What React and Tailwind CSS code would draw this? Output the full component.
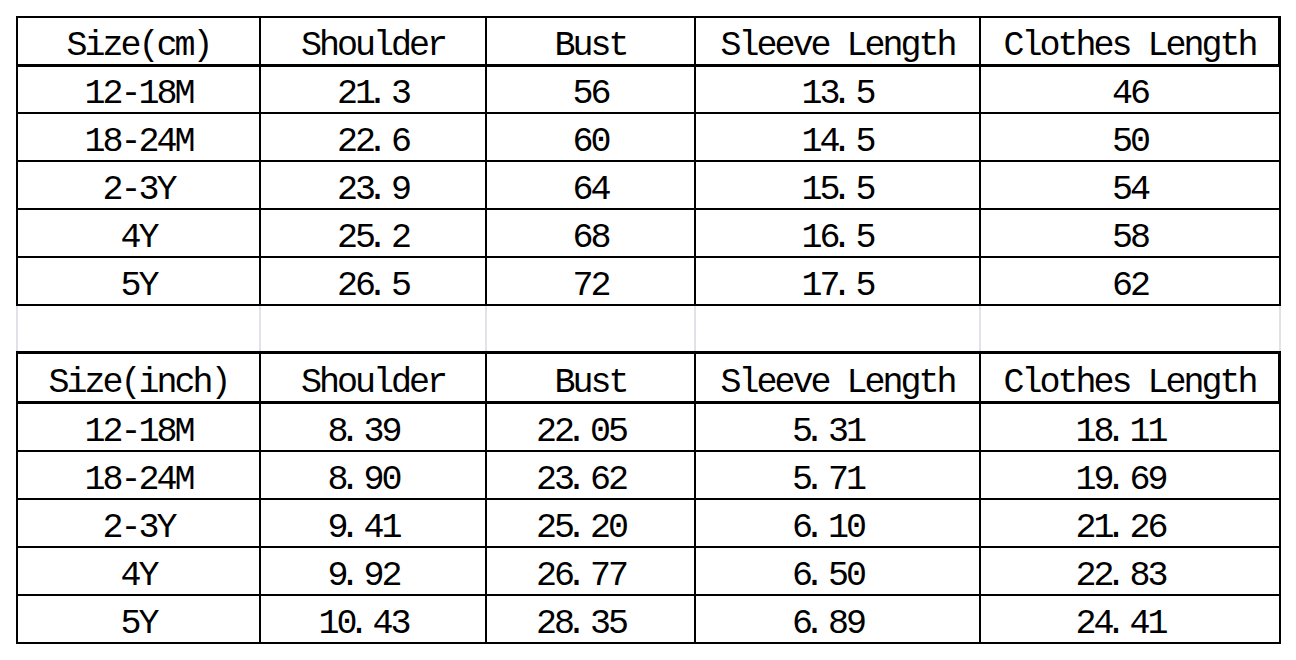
import React from "react";

const cols = "grid grid-cols-[243px_226px_209px_285px_300px]";

const headers = (first) => [first, "Shoulder", "Bust", "Sleeve Length", "Clothes Length"];

const cmRows = [
  ["12-18M", "21.3", "56", "13.5", "46"],
  ["18-24M", "22.6", "60", "14.5", "50"],
  ["2-3Y", "23.9", "64", "15.5", "54"],
  ["4Y", "25.2", "68", "16.5", "58"],
  ["5Y", "26.5", "72", "17.5", "62"],
];

const inchRows = [
  ["12-18M", "8.39", "22.05", "5.31", "18.11"],
  ["18-24M", "8.90", "23.62", "5.71", "19.69"],
  ["2-3Y", "9.41", "25.20", "6.10", "21.26"],
  ["4Y", "9.92", "26.77", "6.50", "22.83"],
  ["5Y", "10.43", "28.35", "6.89", "24.41"],
];

// the period sits at the left of its cell, like in the source sheet
function Num({ value }) {
  const [a, b] = value.split(".");
  if (b === undefined) return value;
  return (
    <>
      {a.slice(0, -1)}
      <span className="tracking-[-9px]">{a.slice(-1)}</span>
      <span className="tracking-[3px]">.</span>
      {b}
    </>
  );
}

function Cell({ children, last, header, shift }) {
  return (
    <div
      className={`flex items-center justify-center pt-[11px] border-black ${
        header ? "border-b-[3px]" : "border-b-2"
      } ${last && header ? "border-r-[3px]" : "border-r-2"} ${shift ? "pr-[19px]" : ""}`}
    >
      {children}
    </div>
  );
}

function SizeTable({ first, rows, top, headH, shiftNums }) {
  return (
    <div className={`w-[1265px] border-l-2 border-black ${top}`}>
      <div className={`${cols} ${headH}`}>
        {headers(first).map((h, i) => (
          <Cell key={h} header last={i === 4}>{h}</Cell>
        ))}
      </div>
      {rows.map((r) => (
        <div key={r[0]} className={`${cols} h-[48px]`}>
          {r.map((v, i) => (
            <Cell key={i} last={i === 4} shift={shiftNums && i > 0}>
              <Num value={v} />
            </Cell>
          ))}
        </div>
      ))}
    </div>
  );
}

export default function App() {
  return (
    <div
      className="w-[1296px] h-[660px] bg-white pl-4 pt-4 text-black text-[35px] leading-none tracking-[-3px] whitespace-pre"
      style={{ fontFamily: '"Liberation Mono", "Noto Sans CJK SC", monospace' }}
    >
      <SizeTable first="Size(cm)" rows={cmRows} top="border-t-2" headH="h-[48px]" />
      <div className={`${cols} h-[45px] w-[1265px] border-l-2 border-[#e1e1e7]`}>
        {[0, 1, 2, 3, 4].map((i) => (
          <div key={i} className="border-r-2 border-[#e1e1e7]" />
        ))}
      </div>
      <SizeTable first="Size(inch)" rows={inchRows} top="border-t-[3px]" headH="h-[50px]" shiftNums />
    </div>
  );
}
